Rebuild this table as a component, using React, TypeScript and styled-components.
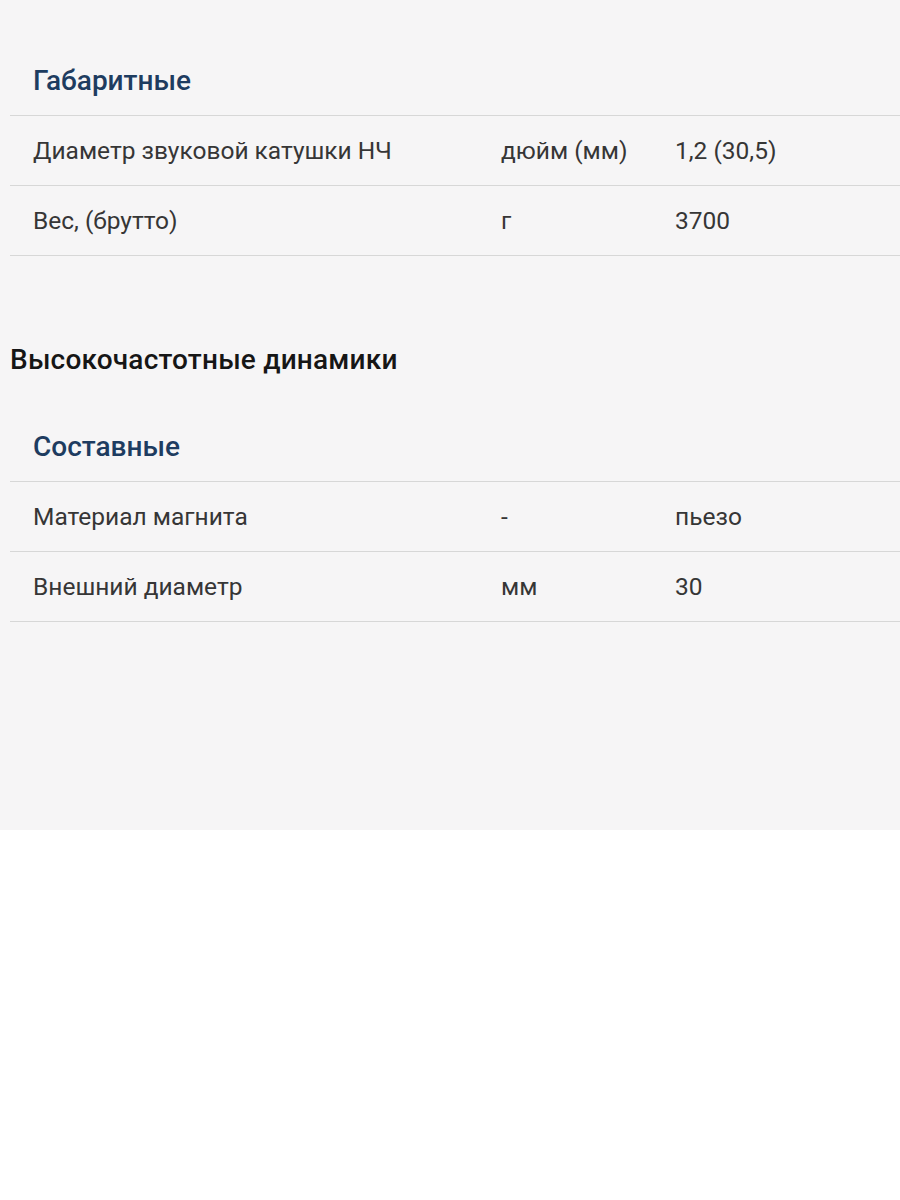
import React from 'react';
import styled, { createGlobalStyle } from 'styled-components';

const GlobalStyle = createGlobalStyle`
  body {
    margin: 0;
    background: #ffffff;
    font-family: Roboto, "Liberation Sans", sans-serif;
  }
`;

const Page = styled.div`
  background: #f6f5f6;
  height: 830px;
  padding: 45px 0 0 10px;
  box-sizing: border-box;
`;

const GroupTitle = styled.div`
  height: 70px;
  display: flex;
  align-items: center;
  padding-left: 23px;
  border-bottom: 1px solid #d7d7d7;
  font-size: 28px;
  font-weight: 500;
  color: #1e3c60;
`;

const Row = styled.div`
  display: grid;
  grid-template-columns: 468px 174px 1fr;
  align-items: center;
  height: 70px;
  box-sizing: border-box;
  padding-left: 23px;
  border-bottom: 1px solid #d7d7d7;
  font-size: 24.5px;
  color: #363636;
`;

const Cell = styled.span`
  white-space: nowrap;
`;

const SectionTitle = styled.h2`
  margin: 89px 0 36px;
  height: 30px;
  line-height: 30px;
  font-size: 28px;
  font-weight: 500;
  letter-spacing: 0.2px;
  color: #161616;
`;

type Spec = [string, string, string];

const Group = ({ title, rows }: { title: string; rows: Spec[] }) => (
  <div>
    <GroupTitle>{title}</GroupTitle>
    {rows.map(([label, unit, value]) => (
      <Row key={label}>
        <Cell>{label}</Cell>
        <Cell>{unit}</Cell>
        <Cell>{value}</Cell>
      </Row>
    ))}
  </div>
);

export default function App() {
  return (
    <>
      <GlobalStyle />
      <Page>
        <Group
          title="Габаритные"
          rows={[
            ['Диаметр звуковой катушки НЧ', 'дюйм (мм)', '1,2 (30,5)'],
            ['Вес, (брутто)', 'г', '3700'],
          ]}
        />
        <SectionTitle>Высокочастотные динамики</SectionTitle>
        <Group
          title="Составные"
          rows={[
            ['Материал магнита', '-', 'пьезо'],
            ['Внешний диаметр', 'мм', '30'],
          ]}
        />
      </Page>
    </>
  );
}
